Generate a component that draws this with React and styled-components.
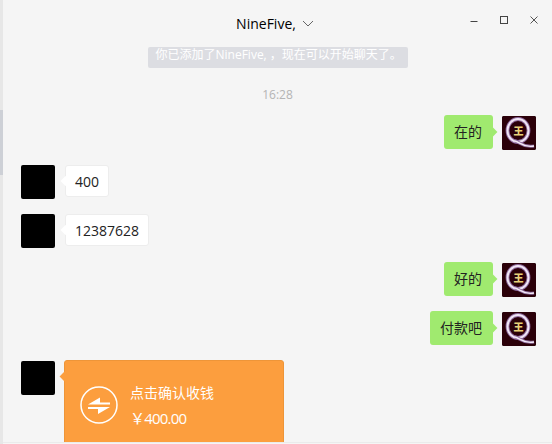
import React from "react"
import styled, { createGlobalStyle } from "styled-components"

const FONT = `"Open Sans", "Noto Sans", "Noto Sans CJK SC", sans-serif`

const messages = [
    { id: 1, side: "right", text: "在的" },
    { id: 2, side: "left", text: "400" },
    { id: 3, side: "left", text: "12387628" },
    { id: 4, side: "right", text: "好的" },
    { id: 5, side: "right", text: "付款吧" },
]

function QAvatar() {
    return (
        <AvatarBox $right>
            <svg width="34" height="34" viewBox="0 0 34 34">
                <rect width="34" height="34" fill="#2b0009" />
                <ellipse cx="16" cy="14.5" rx="10.5" ry="11.5" fill="none" stroke="#8f6a9e" strokeWidth="3.8" />
                <ellipse cx="16" cy="14.5" rx="10.5" ry="11.5" fill="none" stroke="#f0e6f4" strokeWidth="2" />
                <path d="M13 25 C18 26 21 32 32 30" fill="none" stroke="#8f6a9e" strokeWidth="3" />
                <path d="M13 25 C18 26 21 32 32 30" fill="none" stroke="#f3ebf6" strokeWidth="1.4" />
                <text x="16.5" y="18.5" textAnchor="middle" fontSize="10" fontWeight="900" fill="#e8d27a" fontFamily="Noto Sans CJK SC, sans-serif">王</text>
            </svg>
        </AvatarBox>
    )
}

function TransferIcon() {
    return (
        <svg width="38" height="38" viewBox="0 0 38 38">
            <circle cx="19" cy="19" r="18" fill="none" stroke="#fff" strokeWidth="1.5" />
            <path d="M8 18.5 L20 11.5 V16.5 H30 V18.5 Z" fill="#fff" />
            <path d="M8 21 H30 L18 28 V23 H8 Z" fill="#fff" />
        </svg>
    )
}

function WindowControls() {
    return (
        <Controls>
            <svg width="10" height="10" viewBox="0 0 10 10">
                <path d="M1.5 6.5 H8.5" stroke="#444" strokeWidth="1" />
            </svg>
            <svg width="10" height="10" viewBox="0 0 10 10">
                <rect x="1.5" y="1.5" width="7" height="7" fill="none" stroke="#444" strokeWidth="1" />
            </svg>
            <svg width="10" height="10" viewBox="0 0 10 10">
                <path d="M1.5 1.5 L8.5 8.5 M8.5 1.5 L1.5 8.5" stroke="#555" strokeWidth="1" />
            </svg>
        </Controls>
    )
}

export default function App() {
    return (
        <Page>
            <GlobalStyle />
            <Rail>
                <RailThumb />
            </Rail>
            <Chat>
                <Header>
                    <span />
                    <Title>
                        NineFive,
                        <svg width="12" height="7" viewBox="0 0 12 7">
                            <path d="M1 1 L6 6 L11 1" fill="none" stroke="#666" strokeWidth="1" />
                        </svg>
                    </Title>
                    <WindowControls />
                </Header>
                <Notice>你已添加了NineFive, ，现在可以开始聊天了。</Notice>
                <Time>16:28</Time>
                <Messages>
                    {messages.map(m => (
                        <Row key={m.id} $right={m.side === "right"}>
                            {m.side === "left" && <AvatarBox />}
                            <Bubble $right={m.side === "right"}>{m.text}</Bubble>
                            {m.side === "right" && <QAvatar />}
                        </Row>
                    ))}
                    <Row>
                        <AvatarBox />
                        <Card>
                            <TransferIcon />
                            <CardText>
                                <CardTitle>点击确认收钱</CardTitle>
                                <CardAmount>￥400.00</CardAmount>
                            </CardText>
                        </Card>
                    </Row>
                </Messages>
            </Chat>
        </Page>
    )
}

const GlobalStyle = createGlobalStyle`
    html, body {
        margin: 0;
        padding: 0;
        background: #f5f5f5;
    }
`
const Page = styled.div`
    width: 552px;
    height: 444px;
    display: flex;
    overflow: hidden;
    background: #f5f5f5;
    font-family: ${FONT};
`
const Rail = styled.div`
    width: 3px;
    flex: none;
    background: #e7e7e7;
    padding-top: 110px;
    box-sizing: border-box;
`
const RailThumb = styled.div`
    height: 65px;
    background: #cdd0d6;
`
const Chat = styled.div`
    flex: 1;
    height: 442px;
    overflow: hidden;
    border-bottom: 1px solid #ebebeb;
    display: flex;
    flex-direction: column;
`
const Header = styled.div`
    height: 47px;
    flex: none;
    box-sizing: border-box;
    padding-right: 5px;
    display: grid;
    grid-template-columns: 1fr auto 1fr;
    align-items: center;
`
const Title = styled.div`
    display: flex;
    align-items: center;
    gap: 6px;
    font-size: 14px;
    color: #000;
`
const Controls = styled.div`
    justify-self: end;
    display: flex;
    gap: 20px;
    margin: -7px 8px 0 0;
`
const Notice = styled.div`
    align-self: center;
    width: 260px;
    height: 21px;
    box-sizing: border-box;
    padding-left: 8px;
    background: #dcdde2;
    border-radius: 2px;
    color: #fff;
    font-size: 12px;
    line-height: 15px;
    white-space: nowrap;
    overflow: hidden;
`
const Time = styled.div`
    align-self: center;
    margin-top: 18px;
    height: 17px;
    line-height: 17px;
    font-size: 12px;
    color: #b4b4b4;
`
const Messages = styled.div`
    margin-top: 13px;
    padding: 0 16px 0 18px;
    display: flex;
    flex-direction: column;
    gap: 15px;
`
const Row = styled.div`
    display: flex;
    height: 34px;
    gap: 9px;
    justify-content: ${p => (p.$right ? "flex-end" : "flex-start")};
`
const AvatarBox = styled.div`
    width: 34px;
    height: 34px;
    flex: none;
    background: #000;
    border-radius: 2px;
    overflow: hidden;
`
const Bubble = styled.div`
    position: relative;
    height: ${p => (p.$right ? "34px" : "32px")};
    margin-top: ${p => (p.$right ? "-1px" : "0")};
    margin-left: ${p => (p.$right ? "0" : "1px")};
    padding: ${p => (p.$right ? "0 11px 2px 10px" : "0 9px")};
    box-sizing: border-box;
    display: flex;
    align-items: center;
    border-radius: 3px;
    font-size: 14px;
    color: #222;
    background: ${p => (p.$right ? "#a0ea6f" : "#fff")};
    border: ${p => (p.$right ? "none" : "1px solid #ededed")};

    &::after {
        content: "";
        position: absolute;
        top: 50%;
        width: 7px;
        height: 7px;
        background: ${p => (p.$right ? "#a0ea6f" : "#fff")};
        transform: translateY(-50%) rotate(45deg);
        ${p => (p.$right ? "right: -3px;" : "left: -4px;")}
    }
`
const Card = styled.div`
    position: relative;
    width: 220px;
    height: 90px;
    flex: none;
    margin-top: -1px;
    box-sizing: border-box;
    padding: 25px 15px 0;
    display: flex;
    align-items: flex-start;
    gap: 12px;
    background: #fc9e3e;
    border: 1px solid #ee9538;
    border-radius: 3px;

    &::after {
        content: "";
        position: absolute;
        top: 12px;
        left: -4px;
        width: 7px;
        height: 7px;
        background: #fc9e3e;
        transform: rotate(45deg);
    }
`
const CardText = styled.div`
    display: flex;
    flex-direction: column;
    gap: 6px;
    margin-top: -2px;
    color: #fff;
`
const CardTitle = styled.div`
    font-size: 14px;
    line-height: 18px;
`
const CardAmount = styled.div`
    font-size: 15px;
    line-height: 20px;
    letter-spacing: -0.8px;
`
